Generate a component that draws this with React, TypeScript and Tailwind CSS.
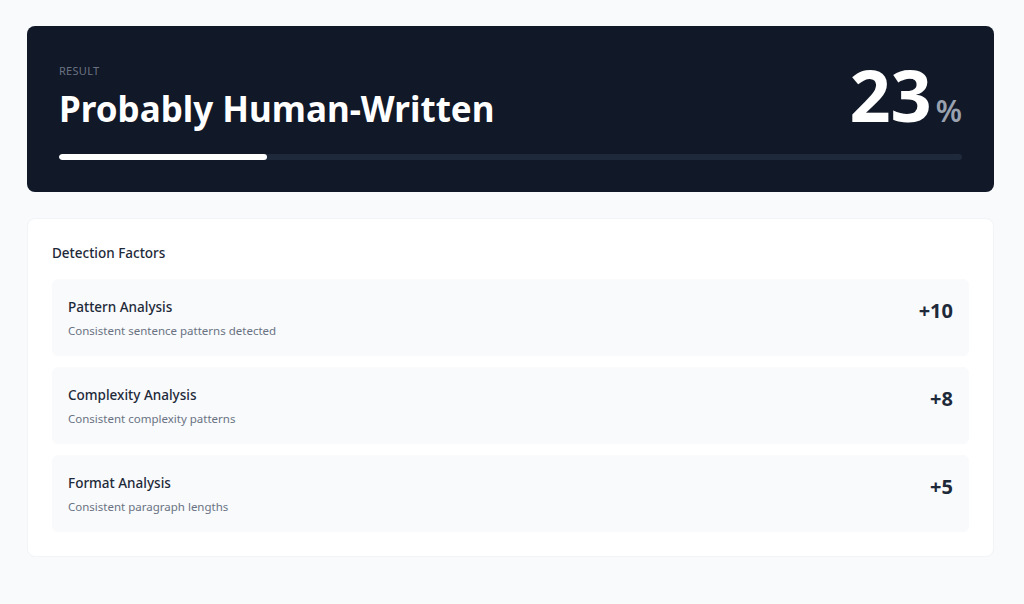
import React from "react";

const factors = [
  { title: "Pattern Analysis", detail: "Consistent sentence patterns detected", score: 10 },
  { title: "Complexity Analysis", detail: "Consistent complexity patterns", score: 8 },
  { title: "Format Analysis", detail: "Consistent paragraph lengths", score: 5 },
];

const App: React.FC = () => {
  const score = 23;

  return (
    <div
      className="min-h-screen w-full bg-[#f8fafc] pl-[27px] pr-[30px] pt-[26px] pb-12"
      style={{ fontFamily: '"Noto Sans", "Open Sans", sans-serif' }}
    >
      <div className="rounded-lg bg-[#111827] p-8">
        <div className="flex items-center justify-between">
          <div className="pt-1">
            <p className="text-[11px] uppercase tracking-wide text-gray-500">Result</p>
            <h2 className="mt-2.5 text-[35px] font-bold leading-10 text-white">Probably Human-Written</h2>
          </div>
          <div className="flex items-baseline">
            <span className="text-7xl font-bold leading-none text-white">{score}</span>
            <span className="ml-1 text-3xl font-semibold text-gray-400">%</span>
          </div>
        </div>
        <div className="mt-6 h-1.5 w-full overflow-hidden rounded-full bg-[#1e293b]">
          <div className="h-full rounded-full bg-white" style={{ width: `${score}%` }} />
        </div>
      </div>

      <div className="mt-[26px] rounded-lg border border-slate-100 bg-white p-6">
        <h3 className="mb-4 text-[13.5px] font-medium leading-5 text-gray-800">Detection Factors</h3>
        <div className="flex flex-col gap-[11px]">
          {factors.map((f) => (
            <div key={f.title} className="flex items-start justify-between rounded-md bg-[#f8fafc] px-4 pt-4 pb-[17px]">
              <div>
                <p className="text-[13.5px] font-medium leading-6 text-gray-800">{f.title}</p>
                <p className="mt-1 text-[11.5px] leading-4 text-gray-500">{f.detail}</p>
              </div>
              <span className="mt-0.5 text-xl font-bold text-gray-800">+{f.score}</span>
            </div>
          ))}
        </div>
      </div>
    </div>
  );
};

export default App;
